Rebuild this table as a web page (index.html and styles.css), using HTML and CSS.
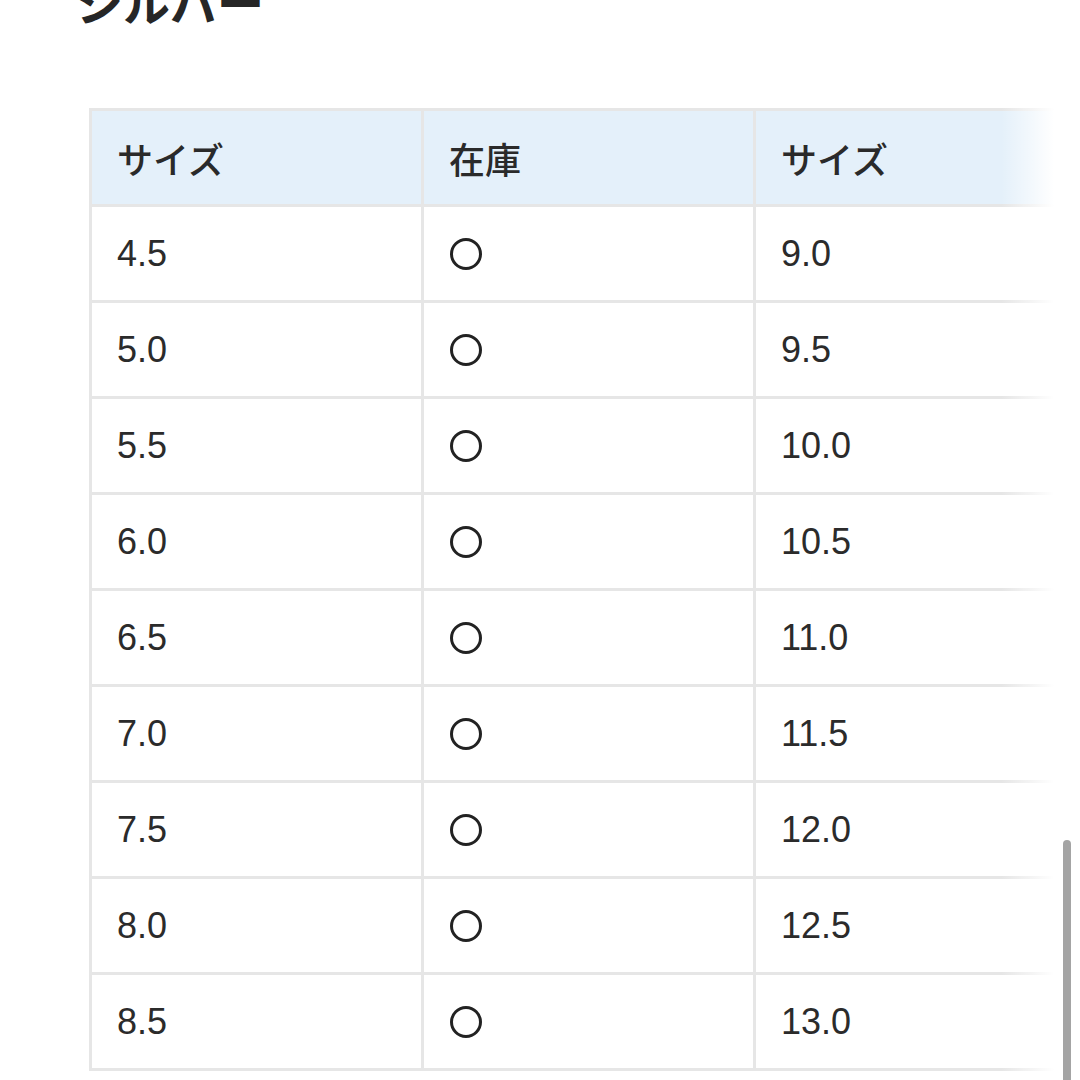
FILE: index.html
```html
<!DOCTYPE html>
<html lang="ja">
<head>
<meta charset="utf-8">
<link rel="stylesheet" href="styles.css">
</head>
<body>
<div class="page">
  <h2 class="title">シルバー</h2>
  <div class="table-wrap">
    <table class="stock">
      <colgroup><col class="c"><col class="c"><col class="c"><col class="c"></colgroup>
      <thead>
        <tr><th>サイズ</th><th>在庫</th><th>サイズ</th><th>在庫</th></tr>
      </thead>
      <tbody>
        <tr><td>4.5</td><td><span class="mark"></span></td><td>9.0</td><td><span class="mark"></span></td></tr>
        <tr><td>5.0</td><td><span class="mark"></span></td><td>9.5</td><td><span class="mark"></span></td></tr>
        <tr><td>5.5</td><td><span class="mark"></span></td><td>10.0</td><td><span class="mark"></span></td></tr>
        <tr><td>6.0</td><td><span class="mark"></span></td><td>10.5</td><td><span class="mark"></span></td></tr>
        <tr><td>6.5</td><td><span class="mark"></span></td><td>11.0</td><td><span class="mark"></span></td></tr>
        <tr><td>7.0</td><td><span class="mark"></span></td><td>11.5</td><td><span class="mark"></span></td></tr>
        <tr><td>7.5</td><td><span class="mark"></span></td><td>12.0</td><td><span class="mark"></span></td></tr>
        <tr><td>8.0</td><td><span class="mark"></span></td><td>12.5</td><td><span class="mark"></span></td></tr>
        <tr><td>8.5</td><td><span class="mark"></span></td><td>13.0</td><td><span class="mark"></span></td></tr>
      </tbody>
    </table>
    <div class="fade"></div>
  </div>
  <div class="scrollbar"></div>
</div>
</body>
</html>
```
FILE: styles.css
```css
html, body {
  margin: 0;
  padding: 0;
  background: #ffffff;
}
body {
  width: 1080px;
  height: 1080px;
  overflow: hidden;
  font-family: "Liberation Sans", "Noto Sans CJK JP", sans-serif;
  color: #2b2b2b;
}
.page {
  position: relative;
  display: flow-root;
  height: 1080px;
}
.title {
  margin: -30px 0 0 76px;
  height: 62px;
  font-family: "Noto Sans CJK JP", sans-serif;
  font-size: 47px;
  font-weight: 700;
  line-height: 62px;
  color: #262626;
}
.table-wrap {
  position: relative;
  margin: 76px 0 0 89px;
  width: 968px;
  overflow: hidden;
}
.stock {
  border-collapse: collapse;
  table-layout: fixed;
  width: 1328px;
  border: 2px solid #e6e6e6;
}
.stock col.c {
  width: 332px;
}
.stock th,
.stock td {
  border: 3px solid #e6e6e6;
  padding: 0 0 0 25px;
  text-align: left;
  vertical-align: middle;
  font-size: 36px;
  font-weight: 400;
}
.stock th {
  height: 93px;
  background: #e4f0fa;
  font-family: "Noto Sans CJK JP", sans-serif;
  font-size: 36px;
  font-weight: 500;
  color: #2a2a2a;
}
.stock td {
  height: 93px;
  line-height: 40px;
}
.mark {
  display: block;
  margin-left: 1px;
  width: 26px;
  height: 26px;
  border: 3px solid #222;
  border-radius: 50%;
}
.fade {
  position: absolute;
  top: 0;
  right: 0;
  width: 56px;
  height: 100%;
  background: linear-gradient(to right, rgba(255,255,255,0), #ffffff 95%);
}
.scrollbar {
  position: absolute;
  left: 1063px;
  top: 840px;
  width: 8px;
  height: 250px;
  border-radius: 4px;
  background: #a4a4a4;
}
```
